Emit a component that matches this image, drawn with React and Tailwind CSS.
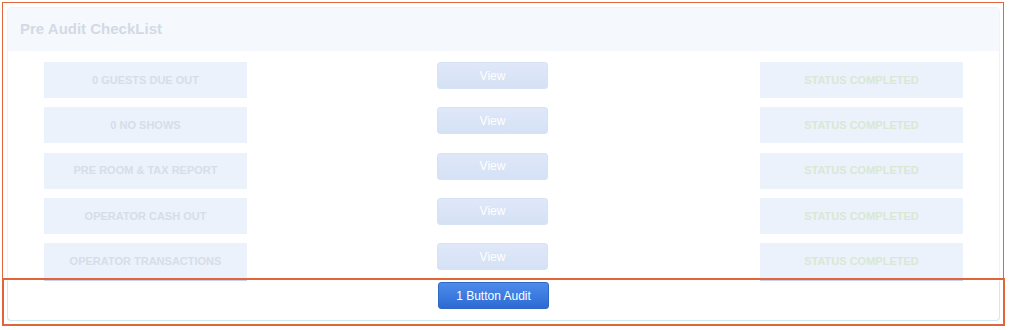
import React from 'react';

const rows = [
  '0 GUESTS DUE OUT',
  '0 NO SHOWS',
  'PRE ROOM & TAX REPORT',
  'OPERATOR CASH OUT',
  'OPERATOR TRANSACTIONS',
];

export default function App() {
  return (
    <div className="relative w-[1009px] h-[330px] bg-white font-['Liberation_Sans',Arial,sans-serif] overflow-hidden">
      <div className="absolute left-[7px] top-[7px] w-[993px] h-[314px] flex flex-col rounded-[4px] border border-[#eef3f8]">
        {/* header */}
        <div className="h-[43px] shrink-0 bg-[#f5f9fd] rounded-t-[4px] flex items-center px-[12px]">
          <h2 className="text-[15px] font-bold text-[#d3d9e5]">Pre Audit CheckList</h2>
        </div>

        {/* list, clipped by footer */}
        <div className="h-[229px] shrink-0 overflow-hidden pt-[11px] pl-[36px]">
          {rows.map((label) => (
            <div key={label} className="flex items-start h-[36px] mb-[9.25px]">
              <div className="w-[203px] h-[36px] bg-[#ebf2fc] flex items-center justify-center text-[11px] font-bold text-[#d7dde7]">
                {label}
              </div>
              <button className="ml-[190px] w-[111px] h-[27px] rounded-[3px] border border-[#d7e3f5] bg-gradient-to-b from-[#dfe8f9] to-[#d5e1f5] text-[12px] text-white">
                View
              </button>
              <div className="ml-[212px] w-[203px] h-[36px] bg-[#ebf2fc] flex items-center justify-center text-[11px] font-bold text-[#d9e8d3]">
                STATUS COMPLETED
              </div>
            </div>
          ))}
        </div>
        <div className="ml-[36px] flex shrink-0 h-[1px]">
          <div className="w-[203px] bg-[#c3d3f1]" />
          <div className="ml-[513px] w-[203px] bg-[#c3d3f1]" />
        </div>

        {/* footer */}
        <div className="flex-1 flex items-start pt-[1px] pl-[430px] border-x border-b border-[#cfeaf3] rounded-b-[4px] -mx-[1px] -mb-[1px]">
          <button className="w-[111px] h-[27px] rounded-[3px] border border-[#2f67c4] bg-gradient-to-b from-[#4d8ceb] to-[#2d6bd3] text-[12px] text-white">
            1 Button Audit
          </button>
        </div>
      </div>

      {/* annotation frames */}
      <div className="absolute left-[2px] top-[2px] w-[1002px] h-[324px] border-[1.5px] border-[#e0663a] pointer-events-none" />
      <div className="absolute left-[2px] top-[278px] w-[1003px] h-[48px] border-2 border-[#e0663a] pointer-events-none" />
    </div>
  );
}
